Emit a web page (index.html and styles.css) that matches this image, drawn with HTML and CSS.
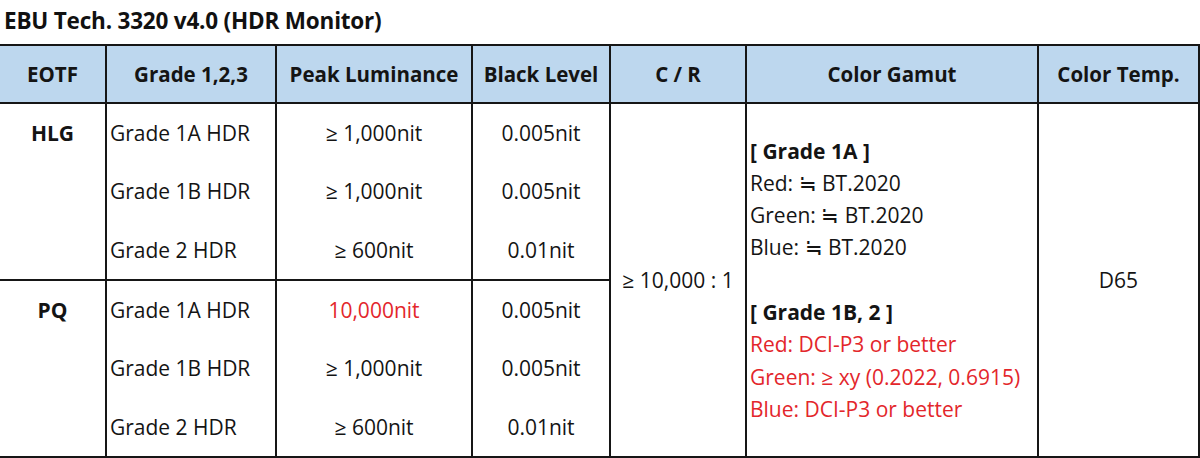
FILE: index.html
```html
<!DOCTYPE html>
<html>
<head>
<meta charset="utf-8">
<link rel="stylesheet" href="styles.css">
</head>
<body>
<div class="title">EBU Tech. 3320 v4.0 (HDR Monitor)</div>
<table class="spec">
  <colgroup>
    <col class="c1"><col class="c2"><col class="c3"><col class="c4"><col class="c5"><col class="c6"><col class="c7">
  </colgroup>
  <thead>
    <tr>
      <th class="first">EOTF</th>
      <th>Grade 1,2,3</th>
      <th>Peak Luminance</th>
      <th>Black Level</th>
      <th>C / R</th>
      <th>Color Gamut</th>
      <th>Color Temp.</th>
    </tr>
  </thead>
  <tbody>
    <tr>
      <td class="eotf first" rowspan="3">HLG</td>
      <td class="grade">Grade 1A HDR</td>
      <td class="num">≥ 1,000nit</td>
      <td class="num">0.005nit</td>
      <td class="num cr" rowspan="6">≥ 10,000 : 1</td>
      <td class="gamut" rowspan="6">
        <div class="gline b">[ Grade 1A ]</div>
        <div class="gline">Red: ≒ BT.2020</div>
        <div class="gline">Green: ≒ BT.2020</div>
        <div class="gline">Blue: ≒ BT.2020</div>
        <div class="gline">&nbsp;</div>
        <div class="gline b">[ Grade 1B, 2 ]</div>
        <div class="gline red">Red: DCI-P3 or better</div>
        <div class="gline red">Green: ≥ xy (0.2022, 0.6915)</div>
        <div class="gline red">Blue: DCI-P3 or better</div>
      </td>
      <td class="num" rowspan="6">D65</td>
    </tr>
    <tr>
      <td class="grade">Grade 1B HDR</td>
      <td class="num">≥ 1,000nit</td>
      <td class="num">0.005nit</td>
    </tr>
    <tr class="sep">
      <td class="grade">Grade 2 HDR</td>
      <td class="num">≥ 600nit</td>
      <td class="num">0.01nit</td>
    </tr>
    <tr>
      <td class="eotf first" rowspan="3">PQ</td>
      <td class="grade">Grade 1A HDR</td>
      <td class="num red">10,000nit</td>
      <td class="num">0.005nit</td>
    </tr>
    <tr>
      <td class="grade">Grade 1B HDR</td>
      <td class="num">≥ 1,000nit</td>
      <td class="num">0.005nit</td>
    </tr>
    <tr>
      <td class="grade">Grade 2 HDR</td>
      <td class="num">≥ 600nit</td>
      <td class="num">0.01nit</td>
    </tr>
  </tbody>
</table>
</body>
</html>
```
FILE: styles.css
```css
html, body {
  margin: 0;
  padding: 0;
  background: #ffffff;
}
body {
  font-family: "Open Sans", "Noto Sans", sans-serif;
  color: #141414;
  width: 1200px;
  height: 458px;
  overflow: hidden;
}
.title {
  height: 44px;
  line-height: 42px;
  padding-left: 4px;
  font-size: 22.5px;
  font-weight: 700;
  color: #111;
  box-sizing: border-box;
  letter-spacing: -0.2px;
}
.spec {
  border-collapse: collapse;
  table-layout: fixed;
  width: 1199px;
  font-size: 21px;
}
.c1 { width: 106px; }
.c2 { width: 170px; }
.c3 { width: 196px; }
.c4 { width: 138px; }
.c5 { width: 136px; }
.c6 { width: 292px; }
.c7 { width: 161px; }
.spec th, .spec td {
  border: 2px solid #161616;
  padding: 0;
}
.spec th {
  background: #bdd7ee;
  height: 56px;
  font-size: 20.5px;
  font-weight: 700;
  text-align: center;
  vertical-align: middle;
}
.spec .first {
  border-left: none;
}
.spec tbody td {
  height: 58.3px;
  border-top: none;
  border-bottom: none;
}
.spec tbody tr.sep td,
.spec tbody td.eotf {
  border-bottom: 2px solid #161616;
}
.spec tbody tr:last-child td,
.spec tbody td[rowspan="6"] {
  border-bottom: 2px solid #161616;
}
.eotf {
  font-weight: 700;
  text-align: center;
  vertical-align: top;
  line-height: 58px;
}
.grade {
  text-align: left;
  padding-left: 3px !important;
  vertical-align: middle;
}
.num {
  text-align: center;
  vertical-align: middle;
}
.cr {
  padding-right: 2px;
}
.gamut {
  text-align: left;
  vertical-align: middle;
  padding-left: 3px !important;
}
.gline {
  line-height: 32.3px;
  white-space: nowrap;
}
.b {
  font-weight: 700;
}
.red {
  color: #e3262b;
}
```
